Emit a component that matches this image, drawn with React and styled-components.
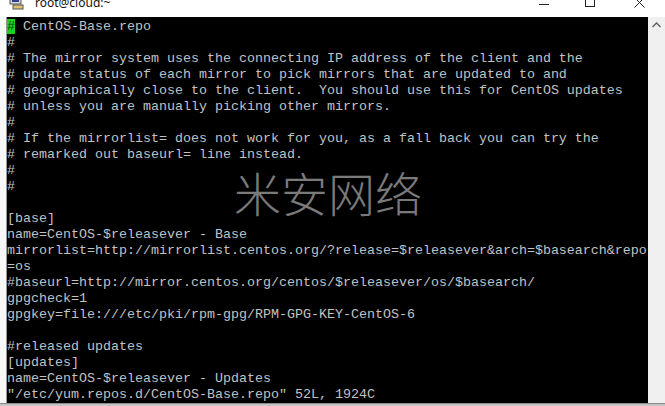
import styled, { createGlobalStyle } from "styled-components";

const GlobalStyle = createGlobalStyle`
    html, body {
        margin:0;
        padding:0;
        width:665px;
        height:406px;
        overflow:hidden;
        background:#ffffff;
    }
`

const Window = styled.div`
    display:flex;
    flex-direction:column;
    width:665px;
    height:406px;
    background:#ffffff;
`

const TitleBar = styled.div`
    height:17px;
    flex-shrink:0;
    overflow:hidden;
    display:flex;
    align-items:flex-start;
    background:#ffffff;
`

const TitleInner = styled.div`
    display:flex;
    align-items:center;
    width:100%;
    height:16px;
    margin-top:-6px;
`

const AppIcon = styled.div`
    width:16px;
    height:16px;
    margin:0 10px 0 9px;
`

const TitleText = styled.span`
    font-family:"Noto Sans", "Liberation Sans", sans-serif;
    font-size:12px;
    color:#111;
    flex:1;
`

const Controls = styled.div`
    display:flex;
    align-items:center;
    height:16px;
`

const Control = styled.div`
    width:${p => p.w}px;
    height:16px;
    display:flex;
    align-items:center;
    justify-content:center;
`

const Body = styled.div`
    display:flex;
    flex:1;
    min-height:0;
`

const LeftEdge = styled.div`
    width:6px;
    background:#f7f7f7;
    border-right:1px solid #9a9a9a;
`

const Terminal = styled.div`
    position:relative;
    flex:1;
    background:#000000;
    overflow:hidden;
`

const Pre = styled.pre`
    margin:0;
    padding-top:2px;
    font-family:"Liberation Mono", "DejaVu Sans Mono", monospace;
    font-size:13.33px;
    line-height:16px;
    color:#c2c2c2;
    white-space:pre;
`

const Cursor = styled.span`
    background:#1fd11f;
    color:#0b4a0b;
`

const Watermark = styled.div`
    position:absolute;
    left:227px;
    top:151px;
    font-family:"Noto Sans CJK SC", sans-serif;
    font-weight:300;
    font-size:47px;
    line-height:1;
    color:#7a7a7a;
    pointer-events:none;
`

const Scrollbar = styled.div`
    width:17px;
    background:#f0f0f0;
    display:flex;
    justify-content:center;
    padding-top:5px;
`

const BottomEdge = styled.div`
    height:2px;
    flex-shrink:0;
    background:#c4c4c4;
    border-top:1px solid #8a8a8a;
`

const lines = [
    null,
    "#",
    "# The mirror system uses the connecting IP address of the client and the",
    "# update status of each mirror to pick mirrors that are updated to and",
    "# geographically close to the client.  You should use this for CentOS updates",
    "# unless you are manually picking other mirrors.",
    "#",
    "# If the mirrorlist= does not work for you, as a fall back you can try the",
    "# remarked out baseurl= line instead.",
    "#",
    "#",
    "",
    "[base]",
    "name=CentOS-$releasever - Base",
    "mirrorlist=http://mirrorlist.centos.org/?release=$releasever&arch=$basearch&repo",
    "=os",
    "#baseurl=http://mirror.centos.org/centos/$releasever/os/$basearch/",
    "gpgcheck=1",
    "gpgkey=file:///etc/pki/rpm-gpg/RPM-GPG-KEY-CentOS-6",
    "",
    "#released updates",
    "[updates]",
    "name=CentOS-$releasever - Updates",
    "\"/etc/yum.repos.d/CentOS-Base.repo\" 52L, 1924C",
]

const App = () => {
    return (
        <Window>
            <GlobalStyle/>
            <TitleBar>
                <TitleInner>
                    <AppIcon>
                        <svg width="16" height="16" viewBox="0 0 16 16">
                            <rect x="1" y="1" width="11" height="9" fill="#d8d8d8" stroke="#555" />
                            <rect x="3" y="3" width="7" height="5" fill="#2a3f8f" />
                            <rect x="4" y="11" width="10" height="4" fill="#e0c070" stroke="#555" />
                        </svg>
                    </AppIcon>
                    <TitleText>root@cloud:~</TitleText>
                    <Controls>
                        <Control w={46}>
                            <svg width="10" height="10" viewBox="0 0 10 10">
                                <line x1="0" y1="7.5" x2="10" y2="7.5" stroke="#222" strokeWidth="1" />
                            </svg>
                        </Control>
                        <Control w={46}>
                            <svg width="10" height="10" viewBox="0 0 10 10">
                                <rect x="0.5" y="0.5" width="9" height="9" fill="none" stroke="#222" strokeWidth="1" />
                            </svg>
                        </Control>
                        <Control w={52}>
                            <svg width="11" height="11" viewBox="0 0 11 11">
                                <path d="M0.5 0.5 L10.5 10.5 M10.5 0.5 L0.5 10.5" stroke="#222" strokeWidth="1" />
                            </svg>
                        </Control>
                    </Controls>
                </TitleInner>
            </TitleBar>
            <Body>
                <LeftEdge/>
                <Terminal>
                    <Pre>
                        {lines.map((l, i) => (
                            <div key={i}>
                                {l === null ? <><Cursor>#</Cursor> CentOS-Base.repo</> : (l || " ")}
                            </div>
                        ))}
                    </Pre>
                    <Watermark>米安网络</Watermark>
                </Terminal>
                <Scrollbar>
                    <svg width="9" height="6" viewBox="0 0 9 6">
                        <path d="M0.5 5 L4.5 1 L8.5 5" fill="none" stroke="#606060" strokeWidth="1.4" />
                    </svg>
                </Scrollbar>
            </Body>
            <BottomEdge/>
        </Window>
    )
}

export default App
